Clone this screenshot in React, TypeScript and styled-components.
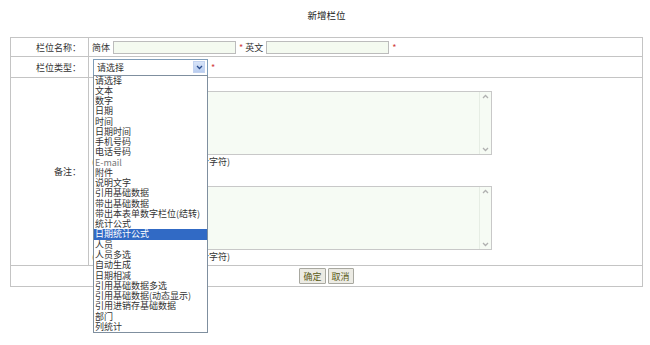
import React from "react";
import styled, { createGlobalStyle } from "styled-components";

const GlobalStyle = createGlobalStyle`
  body {
    margin: 0;
    background: #fff;
    font-family: "Noto Sans CJK SC", "Noto Sans", sans-serif;
    font-size: 9px;
    color: #333;
  }
`;

const Page = styled.div`
  width: 633px;
  height: 345px;
  padding-left: 10px;
`;

const Title = styled.div`
  height: 30px;
  line-height: 30px;
  margin-bottom: 7px;
  text-align: center;
  font-size: 9.5px;
  color: #222;
`;

const Form = styled.div`
  display: grid;
  grid-template-columns: 78px 1fr;
  grid-template-rows: 19px 21px 188px 21px;
  border-top: 1px solid #c4c4c4;
  border-left: 1px solid #c4c4c4;
`;

const Label = styled.div`
  display: flex;
  align-items: center;
  justify-content: flex-end;
  padding-right: 7px;
  border-right: 1px solid #c4c4c4;
  border-bottom: 1px solid #c4c4c4;
  box-sizing: border-box;
  color: #333;
`;

const Field = styled.div<{ $stack?: boolean }>`
  display: flex;
  flex-direction: ${(p) => (p.$stack ? "column" : "row")};
  align-items: ${(p) => (p.$stack ? "flex-start" : "center")};
  gap: ${(p) => (p.$stack ? "0" : "2px")};
  padding: ${(p) => (p.$stack ? "13px 0 0 3px" : "0 0 0 3px")};
  border-right: 1px solid #c4c4c4;
  border-bottom: 1px solid #c4c4c4;
  box-sizing: border-box;
  position: relative;
`;

const ButtonRow = styled.div`
  grid-column: 1 / 3;
  display: flex;
  align-items: center;
  justify-content: center;
  gap: 2px;
  border-right: 1px solid #c4c4c4;
  border-bottom: 1px solid #c4c4c4;
  box-sizing: border-box;
`;

const TextInput = styled.input`
  width: 123px;
  height: 13px;
  box-sizing: border-box;
  border: 1px solid #bcbcbc;
  background: #f4faf0;
  padding: 0;
  margin: 0 0 0 1px;
`;

const Required = styled.span`
  color: #d04040;
  font-size: 9px;
  margin: 0 0 0 1px;
`;

const SelectWrap = styled.div`
  position: relative;
  width: 115px;
  margin-left: 1px;
`;

const SelectBox = styled.div`
  height: 17px;
  box-sizing: border-box;
  border: 1px solid #7f9db9;
  background: #fff;
  display: flex;
  align-items: center;
  justify-content: space-between;
  padding: 0 2px 0 3px;
`;

const ArrowButton = styled.div`
  width: 10px;
  height: 10px;
  background: linear-gradient(#d8e4f8, #b9cdf0);
  border: 1px solid #c3d3f0;
  display: flex;
  align-items: center;
  justify-content: center;
`;

const DropList = styled.ul`
  position: absolute;
  top: 16px;
  left: 0;
  width: 115px;
  box-sizing: border-box;
  margin: 0;
  padding: 0;
  list-style: none;
  border: 1px solid #7f8f9f;
  background: #fff;
  z-index: 5;
`;

const Option = styled.li<{ $selected?: boolean; $muted?: boolean }>`
  height: 10.28px;
  line-height: 10.28px;
  padding-left: 1px;
  white-space: nowrap;
  background: ${(p) => (p.$selected ? "#316ac5" : "transparent")};
  color: ${(p) => (p.$selected ? "#fff" : p.$muted ? "#777" : "#333")};
`;

const AreaBox = styled.div`
  display: flex;
  width: 399px;
  height: 64px;
  box-sizing: border-box;
  border: 1px solid #c8c8c8;
  background: #f6fbf4;
  margin-left: 1px;
`;

const Area = styled.textarea`
  flex: 1;
  border: none;
  background: transparent;
  resize: none;
  outline: none;
  padding: 0;
`;

const ScrollTrack = styled.div`
  width: 11px;
  border-left: 1px solid #e6ede4;
  display: flex;
  flex-direction: column;
  justify-content: space-between;
  align-items: center;
  padding: 2px 0;
`;

const Note = styled.div<{ $gap?: number }>`
  line-height: 14px;
  margin-bottom: ${(p) => p.$gap ?? 0}px;
  white-space: nowrap;
`;

const Button = styled.button`
  height: 16px;
  padding: 0 3px;
  font-family: inherit;
  font-size: 9px;
  color: #5a5a14;
  background: #ecebe4;
  border: 1px solid #a8a8a0;
  border-radius: 1px;
  cursor: pointer;
`;

const Chevron = ({ up, color = "#b0b0b0" }: { up?: boolean; color?: string }) => (
  <svg width="7" height="5" viewBox="0 0 7 5">
    <path
      d={up ? "M1 4 L3.5 1.5 L6 4" : "M1 1 L3.5 3.5 L6 1"}
      fill="none"
      stroke={color}
      strokeWidth="1.3"
    />
  </svg>
);

const options = [
  "请选择",
  "文本",
  "数字",
  "日期",
  "时间",
  "日期时间",
  "手机号码",
  "电话号码",
  "E-mail",
  "附件",
  "说明文字",
  "引用基础数据",
  "带出基础数据",
  "带出本表单数字栏位(结转)",
  "统计公式",
  "日期统计公式",
  "人员",
  "人员多选",
  "自动生成",
  "日期相减",
  "引用基础数据多选",
  "引用基础数据(动态显示)",
  "引用进销存基础数据",
  "部门",
  "列统计",
];

const TextBlock = () => (
  <AreaBox>
    <Area />
    <ScrollTrack>
      <Chevron up />
      <Chevron />
    </ScrollTrack>
  </AreaBox>
);

export default function App() {
  return (
    <Page>
      <GlobalStyle />
      <Title>新增栏位</Title>
      <Form>
        <Label>栏位名称：</Label>
        <Field>
          简体
          <TextInput />
          <Required>*</Required>英文
          <TextInput />
          <Required>*</Required>
        </Field>

        <Label>栏位类型：</Label>
        <Field>
          <SelectWrap>
            <SelectBox>
              请选择
              <ArrowButton>
                <Chevron color="#2a4c8c" />
              </ArrowButton>
            </SelectBox>
            <DropList>
              {options.map((o) => (
                <Option key={o} $selected={o === "日期统计公式"} $muted={o === "E-mail"}>
                  {o}
                </Option>
              ))}
            </DropList>
          </SelectWrap>
          <Required>*</Required>
        </Field>

        <Label>备注：</Label>
        <Field $stack>
          <TextBlock />
          <Note $gap={17}>(限填写备注信息，最多400个字符)</Note>
          <TextBlock />
          <Note>(限填写备注信息，最多400个字符)</Note>
        </Field>

        <ButtonRow>
          <Button>确定</Button>
          <Button>取消</Button>
        </ButtonRow>
      </Form>
    </Page>
  );
}
